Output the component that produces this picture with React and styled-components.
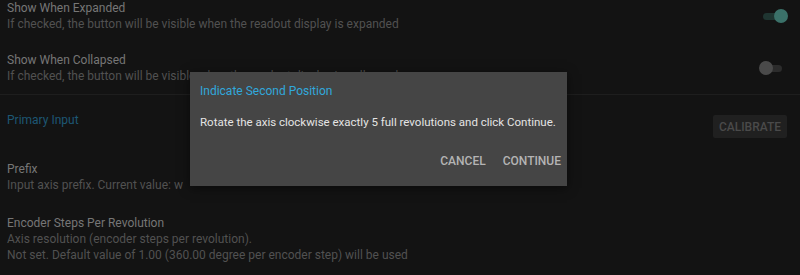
import React from 'react';
import styled, { createGlobalStyle } from 'styled-components';

const GlobalStyle = createGlobalStyle`
  html, body {
    margin: 0;
    padding: 0;
    background: #131313;
    font-family: Roboto, "Noto Sans", sans-serif;
  }
`;

const Page = styled.div`
  position: relative;
  width: 800px;
  height: 275px;
  overflow: hidden;
  background: #131313;
`;

const Row = styled.div`
  display: flex;
  align-items: center;
  justify-content: space-between;
  padding: ${p => p.$top ?? 10}px 18px 10px 7px;
  border-bottom: ${p => (p.$divider ? '1px solid #1e1e1e' : 'none')};
`;

const Texts = styled.div`
  display: flex;
  flex-direction: column;
  white-space: nowrap;
`;

const Title = styled.div`
  font-size: 12px;
  line-height: 16px;
  color: #767676;
`;

const Sub = styled.div`
  font-size: 12px;
  line-height: 16px;
  color: #515151;
`;

const Track = styled.div`
  position: relative;
  width: 19px;
  height: 7px;
  border-radius: 4px;
  background: ${p => (p.$on ? '#1f3531' : '#2c2c2c')};
`;

const Thumb = styled.div`
  position: absolute;
  top: -4px;
  ${p => (p.$on ? 'right: -6px;' : 'left: -4px;')}
  width: 14px;
  height: 14px;
  border-radius: 50%;
  background: ${p => (p.$on ? '#3b7169' : '#4a4a4a')};
`;

const Header = styled.div`
  display: flex;
  align-items: flex-start;
  justify-content: space-between;
  padding: 17px 13px 11px 7px;
`;

const HeaderTitle = styled.div`
  font-size: 12px;
  line-height: 16px;
  color: #1d5774;
`;

const FlatButton = styled.button`
  margin-top: 3px;
  height: 23px;
  width: 74px;
  padding: 0;
  border: none;
  border-radius: 2px;
  background: #202020;
  color: #4a4a4a;
  font-family: Roboto, sans-serif;
  font-weight: 500;
  font-size: 12px;
`;

const Dialog = styled.div`
  position: absolute;
  left: 190px;
  top: 72px;
  width: 377px;
  height: 114px;
  box-sizing: border-box;
  background: #454545;
  padding: 11px 6px 0 10px;
  display: flex;
  flex-direction: column;
  white-space: nowrap;
  box-shadow: 0 2px 10px rgba(0, 0, 0, 0.5);
`;

const DialogTitle = styled.div`
  font-size: 12px;
  line-height: 16px;
  color: #31a8dc;
`;

const DialogBody = styled.div`
  margin-top: 15px;
  font-size: 11.5px;
  line-height: 16px;
  color: #e4e4e4;
`;

const Actions = styled.div`
  margin-top: 23px;
  display: flex;
  justify-content: flex-end;
  gap: 17px;
`;

const ActionButton = styled.button`
  padding: 0;
  border: none;
  background: none;
  color: #b4b4b4;
  font-family: Roboto, sans-serif;
  font-weight: 500;
  font-size: 12px;
  line-height: 16px;
`;

const Toggle = ({ on }) => (
  <Track $on={on}>
    <Thumb $on={on} />
  </Track>
);

const Setting = ({ title, lines, toggle, top, divider }) => (
  <Row $top={top} $divider={divider}>
    <Texts>
      <Title>{title}</Title>
      {lines.map(l => (
        <Sub key={l}>{l}</Sub>
      ))}
    </Texts>
    {toggle !== undefined && <Toggle on={toggle} />}
  </Row>
);

export default function App() {
  return (
    <Page>
      <GlobalStyle />
      <Setting
        top={0}
        title="Show When Expanded"
        lines={['If checked, the button will be visible when the readout display is expanded']}
        toggle={true}
      />
      <Setting
        divider
        title="Show When Collapsed"
        lines={['If checked, the button will be visible when the readout display is collapsed']}
        toggle={false}
      />
      <Header>
        <HeaderTitle>Primary Input</HeaderTitle>
        <FlatButton>CALIBRATE</FlatButton>
      </Header>
      <Setting title="Prefix" lines={['Input axis prefix. Current value: w']} top={12} />
      <Setting
        top={12}
        title="Encoder Steps Per Revolution"
        lines={[
          'Axis resolution (encoder steps per revolution).',
          'Not set. Default value of 1.00 (360.00 degree per encoder step) will be used',
        ]}
      />
      <Dialog>
        <DialogTitle>Indicate Second Position</DialogTitle>
        <DialogBody>Rotate the axis clockwise exactly 5 full revolutions and click Continue.</DialogBody>
        <Actions>
          <ActionButton>CANCEL</ActionButton>
          <ActionButton>CONTINUE</ActionButton>
        </Actions>
      </Dialog>
    </Page>
  );
}
